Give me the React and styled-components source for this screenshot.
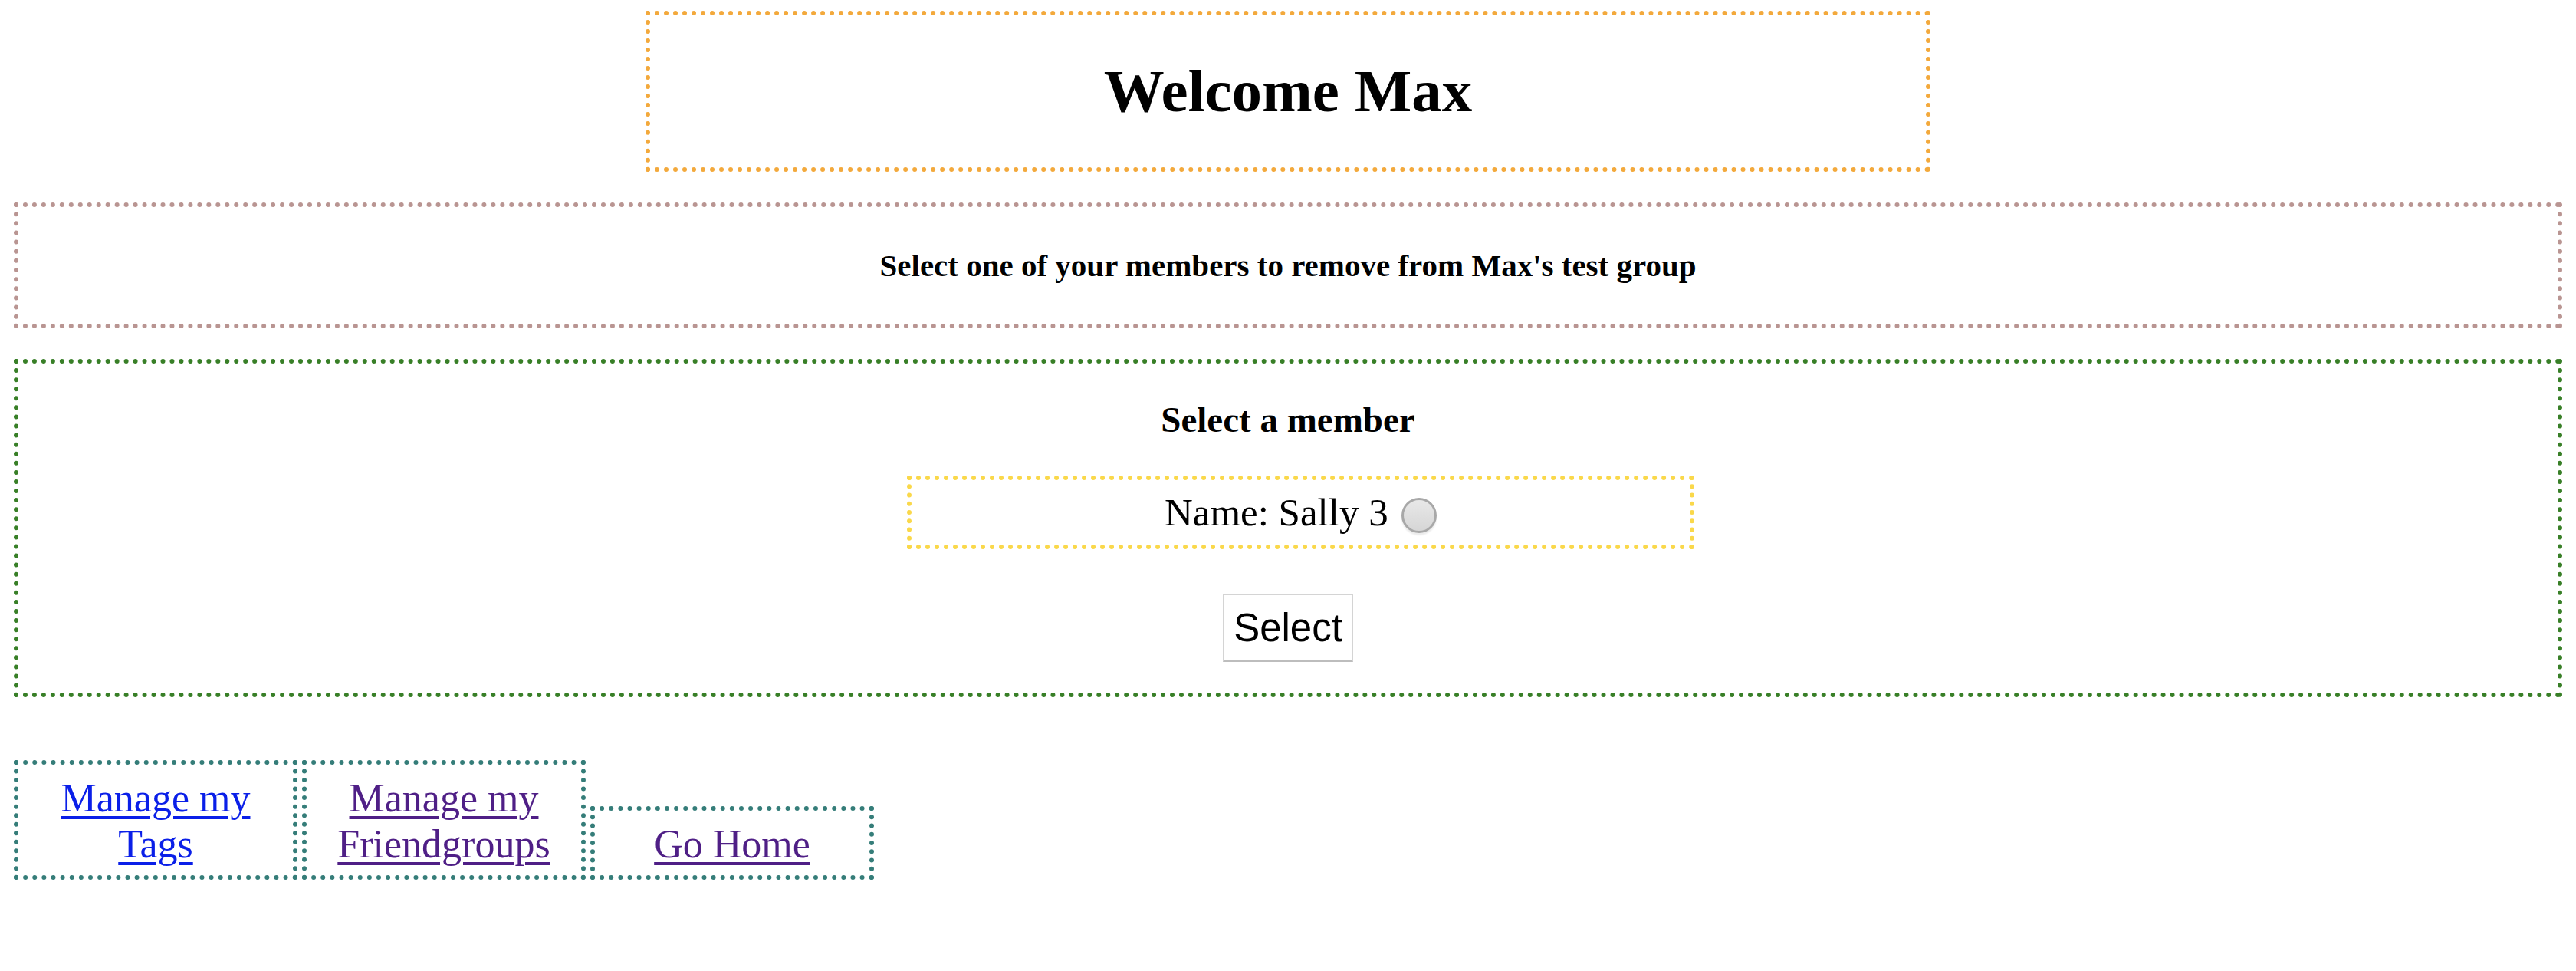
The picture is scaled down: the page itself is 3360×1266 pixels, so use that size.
import React, { useState } from "react";
import styled, { createGlobalStyle } from "styled-components";

const GlobalStyle = createGlobalStyle`
  body {
    margin: 0;
    background: #fff;
    font-family: "Liberation Serif", "Times New Roman", serif;
    color: #000;
  }
`;

const Page = styled.div`
  padding: 14px 18px 0;
`;

const WelcomeBox = styled.div`
  width: 1676px;
  box-sizing: border-box;
  margin: 0 auto;
  border: 6px dotted #f3a93c;
  text-align: center;
`;

const Title = styled.h1`
  font-size: 79px;
  font-weight: bold;
  margin: 53px 0;
  line-height: 92px;
`;

const InfoBox = styled.div`
  margin-top: 40px;
  border: 6px dotted #b99592;
  text-align: center;
`;

const InfoText = styled.h4`
  font-size: 41px;
  font-weight: bold;
  margin: 53px 0 52px;
  line-height: 47px;
`;

const MemberPanel = styled.form`
  margin-top: 40px;
  border: 6px dotted #387f27;
  padding-bottom: 40px;
  text-align: center;
`;

const PanelTitle = styled.h3`
  font-size: 47px;
  font-weight: bold;
  margin: 46px 0 0;
  line-height: 54px;
`;

const MemberOption = styled.label`
  display: block;
  box-sizing: border-box;
  width: 1027px;
  margin: 46px 0 0 35%;
  padding: 12px 0;
  border: 6px dotted #fad84a;
  font-size: 51px;
  line-height: 60px;
`;

const Radio = styled.input`
  appearance: none;
  -webkit-appearance: none;
  box-sizing: border-box;
  width: 46px;
  height: 46px;
  margin: 0 0 0 5px;
  vertical-align: -10px;
  border-radius: 50%;
  border: 3px solid #a8a8a8;
  background: linear-gradient(#e8e8e8, #d6d6d6);
  box-shadow: 0 3px 2px rgba(0, 0, 0, 0.08);

  &:checked {
    background: radial-gradient(circle, #333 30%, #e0e0e0 34%);
  }
`;

const SelectButton = styled.button`
  display: block;
  margin: 58px auto 0;
  padding: 13px 12px;
  font-family: "Liberation Sans", Arial, sans-serif;
  font-size: 51px;
  line-height: 59px;
  color: #000;
  background: #fff;
  border: 2px solid #d4d4d4;
  border-bottom-color: #bdbdbd;
  border-radius: 0;
  cursor: pointer;
`;

const NavRow = styled.div`
  display: flex;
  align-items: flex-end;
  gap: 6px;
  margin-top: 82px;
`;

const NavBox = styled.div`
  box-sizing: border-box;
  width: 370px;
  padding: 14px 8px 10px;
  border: 6px dotted #357d79;
  text-align: center;
  font-size: 52px;
  line-height: 60px;
`;

const NavLink = styled.a`
  color: ${({ $visited }) => ($visited ? "#4f1f86" : "#0a1fe8")};
  text-decoration: underline;
  text-decoration-thickness: 4px;
  text-underline-offset: 6px;
`;

const App = () => {
  const [member, setMember] = useState("");

  const handleSubmit = (e) => {
    e.preventDefault();
  };

  return (
    <Page>
      <GlobalStyle />
      <WelcomeBox>
        <Title>Welcome Max</Title>
      </WelcomeBox>

      <InfoBox>
        <InfoText>Select one of your members to remove from Max's test group</InfoText>
      </InfoBox>

      <MemberPanel onSubmit={handleSubmit}>
        <PanelTitle>Select a member</PanelTitle>
        <MemberOption>
          Name: Sally 3{" "}
          <Radio
            type="radio"
            name="member"
            value="Sally 3"
            checked={member === "Sally 3"}
            onChange={(e) => setMember(e.target.value)}
          />
        </MemberOption>
        <SelectButton type="submit">Select</SelectButton>
      </MemberPanel>

      <NavRow>
        <NavBox>
          <NavLink href="#tags">Manage my Tags</NavLink>
        </NavBox>
        <NavBox>
          <NavLink $visited href="#friendgroups">Manage my Friendgroups</NavLink>
        </NavBox>
        <NavBox>
          <NavLink $visited href="#home">Go Home</NavLink>
        </NavBox>
      </NavRow>
    </Page>
  );
};

export default App;
